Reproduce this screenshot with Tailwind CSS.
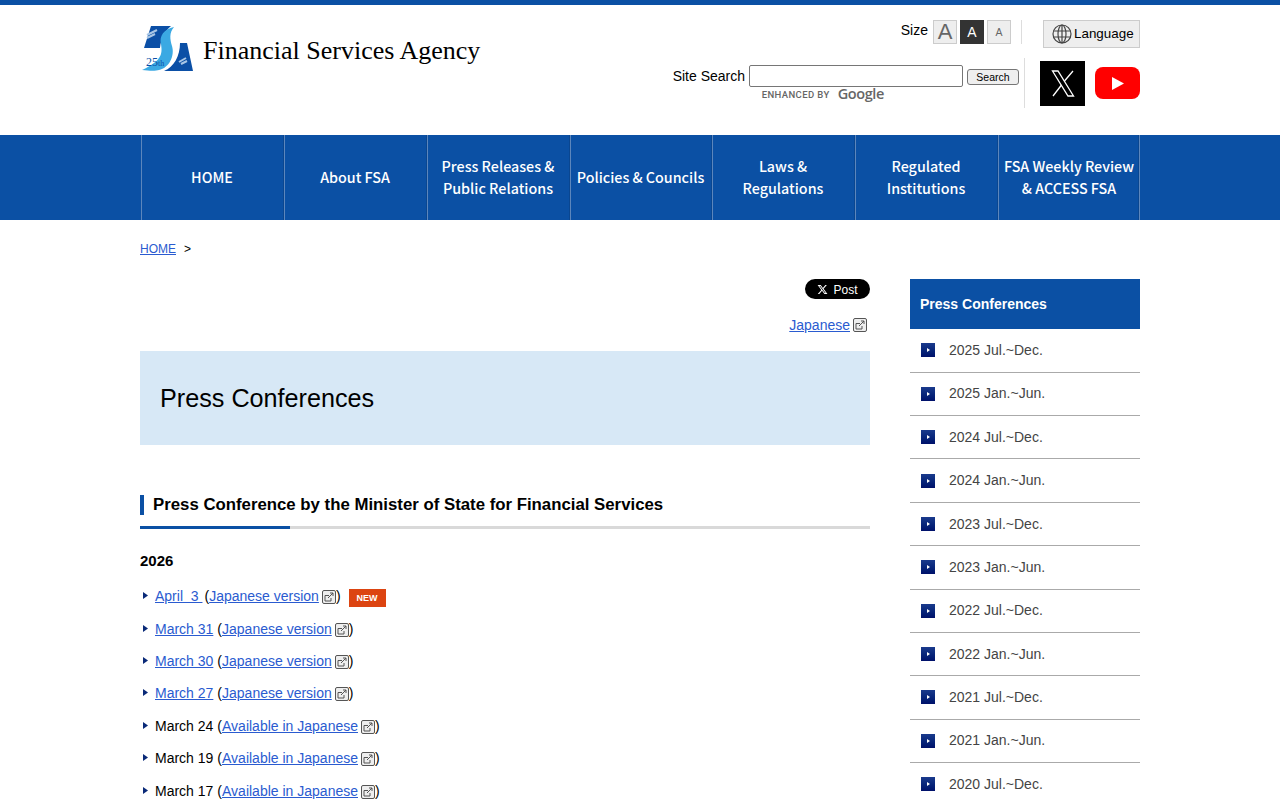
<!DOCTYPE html>
<html lang="en">
<head>
<meta charset="UTF-8" />
<meta name="viewport" content="width=device-width, initial-scale=1.0" />
<title>Press Conferences - Financial Services Agency</title>
<script src="https://cdn.jsdelivr.net/npm/@tailwindcss/browser@4"></script>
</head>

<body class="bg-white text-black font-['Liberation_Sans',Arial,sans-serif] text-[14px]">
<div class="h-[800px] overflow-hidden border-t-[5px] border-[#0b50a4]">

<!-- header -->
<header class="w-[1000px] h-[130px] mx-auto flex justify-between">
  <a href="#" class="flex items-start pt-[21px] pl-[2px]">
    <svg width="52" height="45" viewBox="0 0 52 45">
      <path d="M9 0H29C23 5 19 12 18 22H2Z" fill="#0b4fa6"/>
      <path d="M38 17H45L51 45H22C32 41 38 30 38 17Z" fill="#0b4fa6"/>
      <path d="M32 1C22 3 17 10 19 18C20 26 22 34 0 44C8 45 14 45 17 44C27 42 33 30 30 20C28 13 27 7 32 1Z" fill="#3ba9e3"/>
      <path d="M5 9L15 4M5 12L13 8M37 36L44 32M39 38L45 35" stroke="#a9c6e6" stroke-width="2"/>
      <text x="4" y="40" font-family="Liberation Serif, serif" font-size="12" fill="#0b4fa6">25<tspan font-size="8">th</tspan></text>
    </svg>
    <span class="ml-[9px] mt-[7px] font-['Liberation_Serif',serif] text-[26px] leading-[36px] whitespace-nowrap text-black">Financial Services Agency</span>
  </a>

  <div class="flex flex-col items-end">
    <div class="flex items-start h-[38px] pt-[15px]">
      <span class="mr-[5px] mt-[2px] leading-[16px]">Size</span>
      <button class="w-[24px] h-[24px] bg-[#eee] border border-[#ccc] text-[#666] text-[22px] leading-[22px]">A</button>
      <button class="w-[24px] h-[24px] ml-[3px] bg-[#333] text-white text-[14px] leading-[22px]">A</button>
      <button class="w-[24px] h-[24px] ml-[3px] bg-[#eee] border border-[#ccc] text-[#666] text-[10.5px] leading-[22px]">A</button>
      <div class="w-px h-[24px] bg-[#ddd] ml-[10px] mr-[21px]"></div>
      <button class="w-[97px] h-[28px] bg-[#eee] border border-[#ccc] flex items-center pl-[8px] text-[13.4px]">
        <svg class="shrink-0 mr-[2px]" width="20" height="20" viewBox="0 0 20 20" fill="none" stroke="#444" stroke-width="1.2">
          <circle cx="10" cy="10" r="9"/><ellipse cx="10" cy="10" rx="4" ry="9"/>
          <path d="M10 1V19M1.5 7H18.5M1.5 13H18.5"/>
        </svg>
        Language
      </button>
    </div>
    <div class="flex items-start mt-[15px]">
      <div class="flex flex-col items-start pt-[7px]">
        <form class="flex items-center h-[22px]">
          <label class="mr-[4px] leading-[22px]">Site Search</label>
          <input class="w-[214px] h-[22px] bg-white border border-[#767676] rounded-[2px]" type="text" />
          <button class="w-[52px] h-[16px] ml-[4px] mt-[2px] bg-[#efefef] border border-[#767676] rounded-[3px] text-[10.5px] leading-[14px]">Search</button>
        </form>
        <div class="flex items-center h-[15px] ml-[89px] text-[#666]">
          <span class="mt-[2px] font-['Roboto',sans-serif] font-medium text-[9.5px] tracking-[0.4px] w-[76px] whitespace-nowrap">ENHANCED BY</span>
          <span class="mb-[2px] font-['Open_Sans',sans-serif] font-semibold text-[14.5px] tracking-[-0.4px] leading-[15px]">Google</span>
        </div>
      </div>
      <div class="w-px h-[50px] bg-[#ddd] ml-[5px] mr-[15px]"></div>
      <a href="#" class="w-[45px] h-[45px] mt-[3px] bg-black flex items-center justify-center">
        <svg width="24" height="27" viewBox="0 0 24 27" fill="none" stroke="#fff" stroke-width="1.3"><path d="M1.5 1H7L22.5 26H17Z"/><path d="M22 1L13.5 11M10.5 15L2 26"/></svg>
      </a>
      <a href="#" class="w-[45px] h-[32px] mt-[9px] ml-[10px] bg-[#ff0000] rounded-[8px] flex items-center justify-center">
        <svg class="ml-[1px]" width="12" height="13" viewBox="0 0 12 13"><path d="M0 0L12 6.5L0 13Z" fill="#fff"/></svg>
      </a>
    </div>
  </div>
</header>

<!-- global nav -->
<nav class="h-[85px] bg-[#0b50a4]">
  <ul class="w-[1000px] h-full flex border-l border-[#5c86bc] font-['Noto_Sans_CJK_JP','Noto_Sans',sans-serif] font-medium text-[14.3px] leading-[22px] text-white text-center ml-[calc(50%-499px)]">
    <li class="w-[143px] pr-[2px] pb-[1px] border-r border-[#5c86bc] shadow-[inset_-1px_0_0_#0a4690] flex items-center justify-center">HOME</li>
    <li class="w-[143px] pr-[2px] pb-[1px] border-r border-[#5c86bc] shadow-[inset_-1px_0_0_#0a4690] flex items-center justify-center">About FSA</li>
    <li class="w-[143px] pr-[2px] pb-[2px] border-r border-[#5c86bc] shadow-[inset_-1px_0_0_#0a4690] flex items-center justify-center">Press Releases &amp;<br>Public Relations</li>
    <li class="w-[142px] pr-[2px] pb-[1px] border-r border-[#5c86bc] shadow-[inset_-1px_0_0_#0a4690] flex items-center justify-center whitespace-nowrap">Policies &amp; Councils</li>
    <li class="w-[143px] pr-[2px] pb-[2px] border-r border-[#5c86bc] shadow-[inset_-1px_0_0_#0a4690] flex items-center justify-center">Laws &amp;<br>Regulations</li>
    <li class="w-[143px] pr-[2px] pb-[2px] border-r border-[#5c86bc] shadow-[inset_-1px_0_0_#0a4690] flex items-center justify-center">Regulated<br>Institutions</li>
    <li class="w-[141px] pb-[2px] border-r border-[#5c86bc] shadow-[inset_-1px_0_0_#0a4690] flex items-center justify-center whitespace-nowrap">FSA Weekly Review<br>&amp; ACCESS FSA</li>
  </ul>
</nav>

<div class="w-[1000px] mx-auto">
  <!-- breadcrumb -->
  <p class="h-[59px] pt-[22px] text-[12px] leading-[14px]"><a href="#" class="text-[#2a5bd0] underline">HOME</a><span class="ml-[8px]">&gt;</span></p>

  <div class="flex justify-between">
    <main class="w-[730px]">
      <div class="flex justify-end">
        <a href="#" class="w-[65px] h-[20px] pt-px bg-black rounded-full text-white text-[12px] flex items-center justify-center">
          <svg class="mr-[5px]" width="11" height="11" viewBox="0 0 24 24" fill="#fff"><path d="M18.244 2.25h3.308l-7.227 8.26 8.502 11.24H16.17l-5.214-6.817L4.99 21.75H1.68l7.73-8.835L1.254 2.25H8.08l4.713 6.231zm-1.161 17.52h1.833L7.084 4.126H5.117z"/></svg>
          Post
        </a>
      </div>
      <p class="flex justify-end items-center mt-[17px] pr-[3px] h-[18px]">
        <a href="#" class="text-[#2a5bd0] underline">Japanese</a>
        <svg class="ml-[3px]" width="14" height="14" viewBox="0 0 14 14" fill="none" stroke="#555"><rect x="0.5" y="0.5" width="13" height="13" rx="1.5" fill="#eee"/><path d="M3 5.5H7M3 5.5V11H9V8M6 8L11 3M8 3H11V6"/></svg>
      </p>
      <h1 class="h-[94px] mt-[17px] px-[20px] bg-[#d7e8f6] text-[25.2px] leading-[95px]">Press Conferences</h1>

      <h2 class="mt-[50px] h-[20px] border-l-4 border-[#0b50a4] pl-[9px] font-bold text-[16.8px] leading-[20px]">Press Conference by the Minister of State for Financial Services</h2>
      <div class="mt-[11px] h-[3px] bg-[#d9d9d9]"><div class="w-[150px] h-full bg-[#0b50a4]"></div></div>

      <h3 class="mt-[23px] font-bold text-[15px] leading-[18px]">2026</h3>

      <ul class="mt-[16.2px] leading-[20px]">
        <li class="h-[32.4px] flex items-start pl-[3px]">
          <svg class="mt-[6px] mr-[7px]" width="5" height="7" viewBox="0 0 5 7"><path d="M0 0L5 3.5L0 7Z" fill="#0a2a78"/></svg>
          <a href="#" class="text-[#2a5bd0] underline whitespace-pre">April  3 </a><span class="ml-[2px]">(</span><a href="#" class="text-[#2a5bd0] underline">Japanese version</a>
          <svg class="ml-[3px] mt-[4px]" width="14" height="14" viewBox="0 0 14 14" fill="none" stroke="#555"><rect x="0.5" y="0.5" width="13" height="13" rx="1.5" fill="#eee"/><path d="M3 5.5H7M3 5.5V11H9V8M6 8L11 3M8 3H11V6"/></svg>
          <span>)</span>
          <span class="ml-[8px] mt-[3px] w-[37px] h-[18px] bg-[#dc4411] text-white text-[9px] font-bold leading-[18px] text-center">NEW</span>
        </li>
        <li class="h-[32.4px] flex items-start pl-[3px]">
          <svg class="mt-[6px] mr-[7px]" width="5" height="7" viewBox="0 0 5 7"><path d="M0 0L5 3.5L0 7Z" fill="#0a2a78"/></svg>
          <a href="#" class="text-[#2a5bd0] underline">March 31</a><span class="ml-[4px]">(</span><a href="#" class="text-[#2a5bd0] underline">Japanese version</a>
          <svg class="ml-[3px] mt-[4px]" width="14" height="14" viewBox="0 0 14 14" fill="none" stroke="#555"><rect x="0.5" y="0.5" width="13" height="13" rx="1.5" fill="#eee"/><path d="M3 5.5H7M3 5.5V11H9V8M6 8L11 3M8 3H11V6"/></svg>
          <span>)</span>
        </li>
        <li class="h-[32.4px] flex items-start pl-[3px]">
          <svg class="mt-[6px] mr-[7px]" width="5" height="7" viewBox="0 0 5 7"><path d="M0 0L5 3.5L0 7Z" fill="#0a2a78"/></svg>
          <a href="#" class="text-[#2a5bd0] underline">March 30</a><span class="ml-[4px]">(</span><a href="#" class="text-[#2a5bd0] underline">Japanese version</a>
          <svg class="ml-[3px] mt-[4px]" width="14" height="14" viewBox="0 0 14 14" fill="none" stroke="#555"><rect x="0.5" y="0.5" width="13" height="13" rx="1.5" fill="#eee"/><path d="M3 5.5H7M3 5.5V11H9V8M6 8L11 3M8 3H11V6"/></svg>
          <span>)</span>
        </li>
        <li class="h-[32.4px] flex items-start pl-[3px]">
          <svg class="mt-[6px] mr-[7px]" width="5" height="7" viewBox="0 0 5 7"><path d="M0 0L5 3.5L0 7Z" fill="#0a2a78"/></svg>
          <a href="#" class="text-[#2a5bd0] underline">March 27</a><span class="ml-[4px]">(</span><a href="#" class="text-[#2a5bd0] underline">Japanese version</a>
          <svg class="ml-[3px] mt-[4px]" width="14" height="14" viewBox="0 0 14 14" fill="none" stroke="#555"><rect x="0.5" y="0.5" width="13" height="13" rx="1.5" fill="#eee"/><path d="M3 5.5H7M3 5.5V11H9V8M6 8L11 3M8 3H11V6"/></svg>
          <span>)</span>
        </li>
        <li class="h-[32.4px] flex items-start pl-[3px]">
          <svg class="mt-[6px] mr-[7px]" width="5" height="7" viewBox="0 0 5 7"><path d="M0 0L5 3.5L0 7Z" fill="#0a2a78"/></svg>
          <span>March 24</span><span class="ml-[4px]">(</span><a href="#" class="text-[#2a5bd0] underline">Available in Japanese</a>
          <svg class="ml-[3px] mt-[4px]" width="14" height="14" viewBox="0 0 14 14" fill="none" stroke="#555"><rect x="0.5" y="0.5" width="13" height="13" rx="1.5" fill="#eee"/><path d="M3 5.5H7M3 5.5V11H9V8M6 8L11 3M8 3H11V6"/></svg>
          <span>)</span>
        </li>
        <li class="h-[32.4px] flex items-start pl-[3px]">
          <svg class="mt-[6px] mr-[7px]" width="5" height="7" viewBox="0 0 5 7"><path d="M0 0L5 3.5L0 7Z" fill="#0a2a78"/></svg>
          <span>March 19</span><span class="ml-[4px]">(</span><a href="#" class="text-[#2a5bd0] underline">Available in Japanese</a>
          <svg class="ml-[3px] mt-[4px]" width="14" height="14" viewBox="0 0 14 14" fill="none" stroke="#555"><rect x="0.5" y="0.5" width="13" height="13" rx="1.5" fill="#eee"/><path d="M3 5.5H7M3 5.5V11H9V8M6 8L11 3M8 3H11V6"/></svg>
          <span>)</span>
        </li>
        <li class="h-[32.4px] flex items-start pl-[3px]">
          <svg class="mt-[6px] mr-[7px]" width="5" height="7" viewBox="0 0 5 7"><path d="M0 0L5 3.5L0 7Z" fill="#0a2a78"/></svg>
          <span>March 17</span><span class="ml-[4px]">(</span><a href="#" class="text-[#2a5bd0] underline">Available in Japanese</a>
          <svg class="ml-[3px] mt-[4px]" width="14" height="14" viewBox="0 0 14 14" fill="none" stroke="#555"><rect x="0.5" y="0.5" width="13" height="13" rx="1.5" fill="#eee"/><path d="M3 5.5H7M3 5.5V11H9V8M6 8L11 3M8 3H11V6"/></svg>
          <span>)</span>
        </li>
      </ul>
    </main>

    <!-- side menu -->
    <aside class="w-[230px]">
      <h2 class="h-[50px] px-[10px] bg-[#0b50a4] text-white font-bold text-[14px] leading-[50px]">Press Conferences</h2>
      <ul class="text-[#444]">
        <li class="h-[43.75px] border-b border-[#aaa] flex items-center pl-[11px]"><span class="w-[14px] h-[14px] mr-[14px] flex items-center justify-center bg-gradient-to-b from-[#1a3a8c] to-[#00106a]"><span class="border-l-[3px] border-y-[2.5px] border-y-transparent border-l-white"></span></span>2025 Jul.~Dec.</li>
        <li class="h-[43.36px] border-b border-[#aaa] flex items-center pl-[11px]"><span class="w-[14px] h-[14px] mr-[14px] flex items-center justify-center bg-gradient-to-b from-[#1a3a8c] to-[#00106a]"><span class="border-l-[3px] border-y-[2.5px] border-y-transparent border-l-white"></span></span>2025 Jan.~Jun.</li>
        <li class="h-[43.36px] border-b border-[#aaa] flex items-center pl-[11px]"><span class="w-[14px] h-[14px] mr-[14px] flex items-center justify-center bg-gradient-to-b from-[#1a3a8c] to-[#00106a]"><span class="border-l-[3px] border-y-[2.5px] border-y-transparent border-l-white"></span></span>2024 Jul.~Dec.</li>
        <li class="h-[43.36px] border-b border-[#aaa] flex items-center pl-[11px]"><span class="w-[14px] h-[14px] mr-[14px] flex items-center justify-center bg-gradient-to-b from-[#1a3a8c] to-[#00106a]"><span class="border-l-[3px] border-y-[2.5px] border-y-transparent border-l-white"></span></span>2024 Jan.~Jun.</li>
        <li class="h-[43.36px] border-b border-[#aaa] flex items-center pl-[11px]"><span class="w-[14px] h-[14px] mr-[14px] flex items-center justify-center bg-gradient-to-b from-[#1a3a8c] to-[#00106a]"><span class="border-l-[3px] border-y-[2.5px] border-y-transparent border-l-white"></span></span>2023 Jul.~Dec.</li>
        <li class="h-[43.36px] border-b border-[#aaa] flex items-center pl-[11px]"><span class="w-[14px] h-[14px] mr-[14px] flex items-center justify-center bg-gradient-to-b from-[#1a3a8c] to-[#00106a]"><span class="border-l-[3px] border-y-[2.5px] border-y-transparent border-l-white"></span></span>2023 Jan.~Jun.</li>
        <li class="h-[43.36px] border-b border-[#aaa] flex items-center pl-[11px]"><span class="w-[14px] h-[14px] mr-[14px] flex items-center justify-center bg-gradient-to-b from-[#1a3a8c] to-[#00106a]"><span class="border-l-[3px] border-y-[2.5px] border-y-transparent border-l-white"></span></span>2022 Jul.~Dec.</li>
        <li class="h-[43.36px] border-b border-[#aaa] flex items-center pl-[11px]"><span class="w-[14px] h-[14px] mr-[14px] flex items-center justify-center bg-gradient-to-b from-[#1a3a8c] to-[#00106a]"><span class="border-l-[3px] border-y-[2.5px] border-y-transparent border-l-white"></span></span>2022 Jan.~Jun.</li>
        <li class="h-[43.36px] border-b border-[#aaa] flex items-center pl-[11px]"><span class="w-[14px] h-[14px] mr-[14px] flex items-center justify-center bg-gradient-to-b from-[#1a3a8c] to-[#00106a]"><span class="border-l-[3px] border-y-[2.5px] border-y-transparent border-l-white"></span></span>2021 Jul.~Dec.</li>
        <li class="h-[43.36px] border-b border-[#aaa] flex items-center pl-[11px]"><span class="w-[14px] h-[14px] mr-[14px] flex items-center justify-center bg-gradient-to-b from-[#1a3a8c] to-[#00106a]"><span class="border-l-[3px] border-y-[2.5px] border-y-transparent border-l-white"></span></span>2021 Jan.~Jun.</li>
        <li class="h-[43.36px] border-b border-[#aaa] flex items-center pl-[11px]"><span class="w-[14px] h-[14px] mr-[14px] flex items-center justify-center bg-gradient-to-b from-[#1a3a8c] to-[#00106a]"><span class="border-l-[3px] border-y-[2.5px] border-y-transparent border-l-white"></span></span>2020 Jul.~Dec.</li>
      </ul>
    </aside>
  </div>
</div>

</div>
</body>
</html>
